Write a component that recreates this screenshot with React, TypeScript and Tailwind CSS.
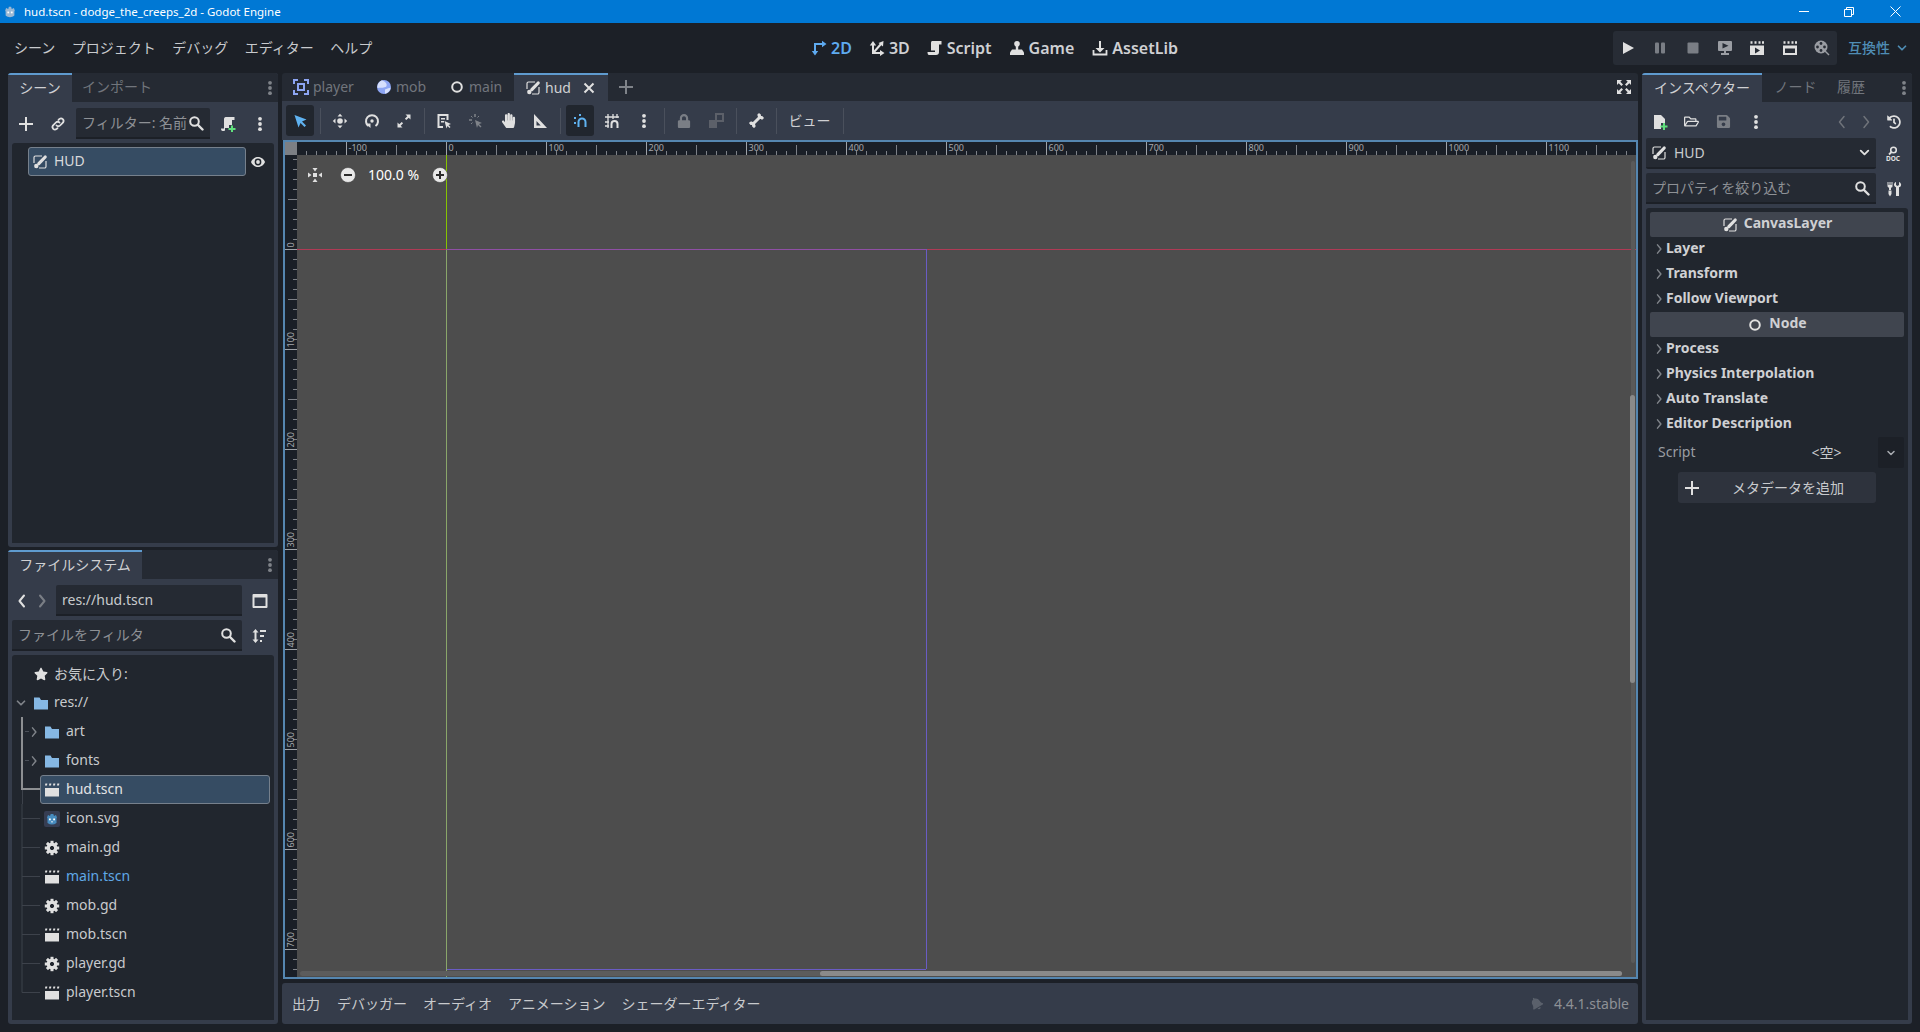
import React from "react";
import { FaBone, FaHandPaper, FaLock, FaStar, FaSave, FaRegFolderOpen, FaHistory, FaBell } from "react-icons/fa";

const C = "#e0e0e0";
type P = { children?: React.ReactNode; s?: number; c?: string };
const I = ({ children, s = 16 }: P) => (
  <svg width={s} height={s} viewBox="0 0 16 16" className="block shrink-0">{children}</svg>
);
const Plus = ({ c = C, s = 16 }: P) => <I s={s}><path d="M7 1h2v6h6v2H9v6H7V9H1V7h6z" fill={c} /></I>;
const Dots = ({ c = C }: P) => <I><circle cx="8" cy="2.8" r="1.9" fill={c} /><circle cx="8" cy="8" r="1.9" fill={c} /><circle cx="8" cy="13.2" r="1.9" fill={c} /></I>;
const Search = ({ c = C }: P) => <I><circle cx="6.5" cy="6.5" r="4.3" fill="none" stroke={c} strokeWidth="2" /><path d="M10 10l4.5 4.5" stroke={c} strokeWidth="2.4" strokeLinecap="round" /></I>;
const Chev = ({ d, c = C, s = 16, w = 2 }: { d: "l" | "r" | "d"; c?: string; s?: number; w?: number }) => (
  <I s={s}><path d={d === "l" ? "M10 2.5L5.5 8l4.5 5.5" : d === "r" ? "M6 2.5L10.5 8 6 13.5" : "M4 6l4 4 4-4"} fill="none" stroke={c} strokeWidth={w} strokeLinecap="round" strokeLinejoin="round" /></I>
);
const Paint = ({ c = C }: P) => <I><path d="M10 2H3.5A1.5 1.5 0 0 0 2 3.5V9M7 14h5.5a1.5 1.5 0 0 0 1.5-1.5V7" fill="none" stroke={c} strokeWidth="1.2" /><path d="M13.2 3L6.8 9.6" stroke={c} strokeWidth="3.2" strokeLinecap="round" /><circle cx="4.3" cy="12" r="2.2" fill={c} /></I>;
const NodeI = ({ c = C }: P) => <I><circle cx="8" cy="8" r="4.8" fill="none" stroke={c} strokeWidth="2" /></I>;
const Player = () => <I><path d="M1 5V1h4M11 1h4v4M15 11v4h-4M5 15H1v-4" fill="none" stroke="#8da5f3" strokeWidth="2" /><rect x="5" y="5" width="6" height="6" fill="none" stroke="#8da5f3" strokeWidth="2" /></I>;
const Mob = () => <I><circle cx="8" cy="8" r="7" fill="#8da5f3" /><path d="M6 1.200C8.500 2.500 11.500 4 10.500 7c-.8 2-4.500 1.500-7 1.800C2.500 9 2 9 1.200 8.500 1.500 4.500 3.500 2 6 1.200z" fill="#d6dffc" /><path d="M9 10.500c1.500-.5 3.500-1.500 5.700-1.800-.5 3-3 5.500-5.700 6.100z" fill="#d6dffc" /></I>;
const Scene = ({ c = C }: P) => <I><path d="M1 6h14v8.500H1z" fill={c} /><path d="M1 2.500h2M5 2.500h2M9 2.500h2M13 2.500h2" stroke={c} strokeWidth="2" transform="skewX(-10) translate(.6 0)" /></I>;
const Folder = () => <I><path d="M1 2.500h5.500L8 5h7v9.500H1z" fill="#86b8e4" /></I>;
const Gear = () => (
  <I>
    <circle cx="8" cy="8" r="3.800" fill="none" stroke={C} strokeWidth="3.200" />
    {[0, 45, 90, 135].map((a) => <rect key={a} x="6.500" y="0.800" width="3" height="14.400" fill={C} transform={`rotate(${a} 8 8)`} mask="url(#gh)" />)}
    <mask id="gh"><rect width="16" height="16" fill="white" /><circle cx="8" cy="8" r="2.300" fill="black" /></mask>
  </I>
);
const Godot = ({ bg }: { bg?: boolean }) => (
  <I>
    {bg && <rect width="16" height="16" rx="2" fill="#363d52" />}
    <path d="M3 6.500l1-2.500 2 1 .7-2h2.600l.7 2 2-1 1 2.500-.5 1V12c-3 2-6 2-9 0V7.500z" fill={bg ? "#478cbf" : "#9ab8d4"} />
    <rect x="5" y="7.500" width="1.800" height="1.800" fill="#fff" /><rect x="9.200" y="7.500" width="1.800" height="1.800" fill="#fff" />
    <rect x="7.300" y="10" width="1.400" height="1.500" fill="#fff" opacity=".8" />
  </I>
);
const Cursor = ({ c = C }: P) => <I><path d="M2.500 2l12 4.500-4.500 2 4 4-1.500 1.500-4-4-2 4.500z" fill={c} /></I>;
const Move = () => <I><path d="M8 .8L10.500 3.500h-5zM8 15.200L5.500 12.500h5zM.8 8L3.500 5.500v5zM15.200 8L12.500 10.500v-5z" fill={C} /><circle cx="8" cy="8" r="2.800" fill={C} /></I>;
const Rotate = () => <I><path d="M4.500 13A6 6 0 1 1 11.500 13" fill="none" stroke={C} strokeWidth="2" /><path d="M1.500 10.500h5v4.500z" fill={C} /><circle cx="8" cy="8" r="1.700" fill={C} /></I>;
const Scale = () => <I><path d="M9.500 1.500h5v5l-1.800-1.800-2.400 2.400-1.400-1.400 2.400-2.400zM6.500 14.500h-5v-5l1.800 1.800 2.400-2.400 1.400 1.400-2.400 2.400z" fill={C} /></I>;
const ListSel = () => <I><path d="M1.500 1h11v6h-2V3H3.500v10H7v2H1.500zM5 5h4v1.500H5zM5 8h3v1.500H5z" fill={C} /><path d="M8.500 8l6.500 3-2.500 1 2 2-1 1-2-2-1 2.500z" fill={C} /></I>;
const SelGhost = () => <I><path d="M7 1v3M1 7h3" stroke="#7f8389" strokeWidth="1.500" /><path d="M7 7l7 3-3 1 2.500 2.500-1 1L10 12l-1 3z" fill="#7f8389" /><path d="M3 3l1.500 1.500M3 11l1.500-1.500M11 3L9.500 4.500" stroke="#7f8389" strokeWidth="1" /></I>;
const RulerI = () => <I><path fillRule="evenodd" d="M2 1l13 14H2zM4.500 8v4.500h4.200z" fill={C} /></I>;
const Snap = () => <I><path d="M6.500 14V9a3.500 3.500 0 0 1 7 0v5" fill="none" stroke="#5fb2f0" strokeWidth="2" /><rect x="2" y="4" width="2" height="2" fill="#5fb2f0" /><rect x="2" y="9" width="2" height="2" fill="#5fb2f0" /><rect x="7" y="1" width="2" height="2" fill="#5fb2f0" /></I>;
const GridI = () => <I><path d="M4 1v14M9 1v5M13 1v4M1 4h14M1 9h4M1 13h4" stroke={C} strokeWidth="1.300" /><path d="M7.500 15v-4a3 3 0 0 1 6 0v4" fill="none" stroke={C} strokeWidth="2" /></I>;
const Group = () => <I><path d="M8 1h7v7H8z" fill="none" stroke="#5c6069" strokeWidth="2" /><path d="M1 7h8v8H1z" fill="#5c6069" /></I>;
const Expand = () => <I><path d="M1 1h5L4.300 2.700 7 5.400 5.400 7 2.700 4.300 1 6zM15 1v5l-1.700-1.700L10.600 7 9 5.400l2.700-2.700L10 1zM1 15v-5l1.700 1.700L5.400 9 7 10.600l-2.700 2.700L6 15zM15 15h-5l1.700-1.700L9 10.600 10.600 9l2.700 2.700L15 10z" fill={C} /></I>;
const Eye = () => <I><path d="M8 3C4.500 3 2 5.500 1 8c1 2.500 3.500 5 7 5s6-2.500 7-5c-1-2.500-3.500-5-7-5z" fill={C} /><circle cx="8" cy="8" r="3.400" fill="#21262e" /><circle cx="8" cy="8" r="1.900" fill={C} /></I>;
const ScriptAdd = () => <I><path d="M5.500 1h9v3H12v5H9v3H5v1.500c0 1-.5 1.500-1 1.500H2.500C1.500 15 1 14 1 12.500h3V3a2 2 0 0 1 1.500-2z" fill={C} /><path d="M11 9.500h2V12h2.500v2H13v2h-2v-2H8.500v-2H11z" fill="#5fe07c" /></I>;
const FileAdd = () => <I><path d="M2 1h7l4 4v4H9v6H2z" fill={C} /><path d="M11 9h2v2.500h2.500v2H13V16h-2v-2.500H8.500v-2H11z" fill="#5fe07c" /></I>;
const D2 = () => <I><path d="M4 13V4h8" fill="none" stroke="#5eaaf0" strokeWidth="2" /><path d="M.8 11h6.400L4 15.500zM11 .8L15.500 4 11 7.200z" fill="#5eaaf0" /></I>;
const D3 = () => <I><path d="M4 4v9h9M5 12l7-8" fill="none" stroke={C} strokeWidth="2" /><path d="M.8 5.500L4 1l3.200 4.500zM11 10l4.500 3-4.500 3zM9.500 3l5-2-.5 5.500z" fill={C} /></I>;
const ScriptI = () => <I><path d="M5 1h9.500v3.500H12V12c0 2-1 3-3 3H2c-1-.3-1.500-1-1.500-3H8v-1.500H4V3a2 2 0 0 1 1-2z" fill={C} /></I>;
const Game = () => <I><circle cx="8" cy="3.800" r="2.800" fill={C} /><rect x="6.800" y="5" width="2.400" height="6" fill={C} /><path d="M3 9.500h10l2 3v2.500H1v-2.500z" fill={C} /></I>;
const Asset = () => <I><path d="M7 1h2v7h3.500L8 12.500 3.500 8H7z" fill={C} /><path d="M1.500 10v4.500h13V10" fill="none" stroke={C} strokeWidth="1.800" /></I>;
const Play = () => <I><path d="M3 2l11 6-11 6z" fill={C} /></I>;
const Pause = () => <I><rect x="3" y="2.500" width="4" height="11" rx="1" fill="#7a7e85" /><rect x="9" y="2.500" width="4" height="11" rx="1" fill="#7a7e85" /></I>;
const Stop = () => <I><rect x="2.500" y="2.500" width="11" height="11" rx="1" fill="#7a7e85" /></I>;
const Remote = () => <I><path d="M2 1h12a1 1 0 0 1 1 1v8a1 1 0 0 1-1 1H9v2h3v2H4v-2h3v-2H2a1 1 0 0 1-1-1V2a1 1 0 0 1 1-1z" fill="#9a9da3" /><path d="M5.500 3l6 2.800-6 2.800z" fill="#272c35" /></I>;
const Clap = ({ open }: { open?: boolean }) => <I>{open ? <path fillRule="evenodd" d="M1 5.500h14V15H1zM3 8.500v4.500h10V8.500z" fill={C} /> : <path fillRule="evenodd" d="M1 5.500h14V15H1zM6 7.500v6l5-3z" fill={C} />}<path d="M1.500 2.500h2M5.500 2.500h2M9.500 2.500h2M13 2.500h2" stroke={C} strokeWidth="2.400" /></I>;
const Film = () => <I><circle cx="7" cy="7" r="6.500" fill="#9a9da3" /><circle cx="7" cy="3.500" r="1.400" fill="#272c35" /><circle cx="7" cy="10.500" r="1.400" fill="#272c35" /><circle cx="3.500" cy="7" r="1.400" fill="#272c35" /><circle cx="10.500" cy="7" r="1.400" fill="#272c35" /><path d="M11 11l4 4" stroke="#9a9da3" strokeWidth="1.500" /></I>;
const Doc = () => <I><circle cx="8.500" cy="4" r="2.800" fill="none" stroke={C} strokeWidth="1.600" /><path d="M6.500 6L4 8.500" stroke={C} strokeWidth="1.800" /><text x="8" y="14.800" textAnchor="middle" fontSize="6.500" fontWeight="700" fill={C} fontFamily="Noto Sans">DOC</text></I>;
const Tools = () => <I><path d="M1.500 1v4c0 1 1 1.500 1.500 1.800V9h2V6.800C6 6.500 6.500 6 6.500 5V1h-1v3h-1V1h-1v3h-1V1z" fill={C} /><path d="M2.500 9.500h3V13L4 15.500 2.500 13zM10 1v3l1.500 1L13 4V1c1.500.5 2.500 2 2 3.500-.3 1-1 1.500-2 1.800V15h-3V6.300C8.500 5.800 8 4.500 8 3.500 8 2.300 9 1.300 10 1z" fill={C} /></I>;
const Sort = () => <I><path d="M4.500 1L7.500 4.500H5.500v7h2L4.500 15l-3-3.500h2v-7h-2z" fill={C} /><path d="M9 2h6v2H9zM9 7h4v2H9zM9 12h2v2H9z" fill={C} /></I>;
const Layout = () => <I><path fillRule="evenodd" d="M1.500 1h13a1 1 0 0 1 1 1v12a1 1 0 0 1-1 1h-13a1 1 0 0 1-1-1V2a1 1 0 0 1 1-1zM2.500 4.500v8.500h11V4.500z" fill={C} /></I>;
const LinkI = () => <I><path d="M6.500 9.500a2.500 2.500 0 0 0 3.600 0l3-3a2.600 2.600 0 0 0-3.600-3.600l-1 1M9.500 6.500a2.500 2.500 0 0 0-3.600 0l-3 3a2.600 2.600 0 0 0 3.600 3.600l1-1" fill="none" stroke={C} strokeWidth="1.800" strokeLinecap="round" /></I>;
const CenterView = () => <I><path d="M5.500 1h5L8 4.500zM5.500 15h5L8 11.500zM1 5.500v5L4.500 8zM15 5.500v5L11.500 8z" fill={C} /><rect x="6" y="6" width="4" height="4" fill={C} /></I>;
const Zoom = ({ plus }: { plus?: boolean }) => (
  <svg width="16" height="16" viewBox="0 0 16 16" className="block shrink-0"><circle cx="8" cy="8" r="7.500" fill="#e8e8e8" stroke="#333" strokeOpacity=".5" /><path d={plus ? "M7 4h2v3h3v2H9v3H7V9H4V7h3z" : "M4 7h8v2H4z"} fill="#2b2b2b" /></svg>
);

const Sep = ({ w = 8 }: { w?: number }) => (
  <div className="h-[26px] flex justify-center shrink-0" style={{ width: w }}><div className="w-px h-full bg-[#4a505c]" /></div>
);
const Tool = ({ children, on }: { children: React.ReactNode; on?: boolean }) => (
  <div className="w-8 h-[31px] flex items-center justify-center shrink-0">
    <div className={`w-7 h-[31px] flex items-center justify-center rounded-[3px] ${on ? "bg-[#21262e]" : ""}`}>{children}</div>
  </div>
);

const HRuler = () => {
  const ticks: React.ReactNode[] = [];
  for (let u = -140; u <= 1180; u += 10) {
    const x = 149.5 + u;
    const major = u % 100 === 0;
    const mid = u % 50 === 0;
    ticks.push(<line key={u} x1={x} x2={x} y1={major ? 0 : mid ? 3 : 9} y2={13} stroke={major ? "#9ea2a8" : "#7d8188"} />);
    if (major) ticks.push(<text key={"t" + u} x={x + 2} y={9} fontSize="9" fill="#a4a7ac" fontFamily="Noto Sans">{u}</text>);
  }
  return <svg width="1339" height="13" className="block bg-[#1a1f27]">{ticks}</svg>;
};
const VRuler = () => {
  const ticks: React.ReactNode[] = [];
  for (let u = -90; u <= 730; u += 10) {
    const y = 94.5 + u;
    const major = u % 100 === 0;
    const mid = u % 50 === 0;
    ticks.push(<line key={u} y1={y} y2={y} x1={major ? 0 : mid ? 3 : 8} x2={12} stroke={major ? "#9ea2a8" : "#7d8188"} />);
    if (major) ticks.push(<text key={"t" + u} transform={`translate(9 ${y - 2}) rotate(-90)`} fontSize="9" fill="#a4a7ac" fontFamily="Noto Sans">{u}</text>);
  }
  return <svg width="12" height="822" className="block bg-[#1a1f27] shrink-0">{ticks}</svg>;
};

const Guide = ({ bright, last, tick, topBright }: { bright?: boolean; last?: boolean; tick?: boolean; topBright?: boolean }) => (
  <svg width="40" height="29" className="block shrink-0">
    <line x1="10" x2="10" y1="0" y2={last ? 14.5 : bright ? 15 : 29} stroke={topBright ? "#8d8f92" : "#3d424b"} strokeWidth={topBright ? 2 : 1} />
    {bright && <line x1="10.500" x2="10.500" y1="15" y2="29" stroke="#3d424b" />}
    {tick ? <line x1="13" x2="17" y1="14.5" y2="14.5" stroke="#4a4f58" /> : <line x1="10" x2="28" y1={bright ? 14 : 14.5} y2={bright ? 14 : 14.5} stroke={bright ? "#8d8f92" : "#3d424b"} strokeWidth={bright ? 2 : 1} />}
  </svg>
);

const FileRow = ({ icon, name, last, blue }: { icon: React.ReactNode; name: string; last?: boolean; blue?: boolean }) => (
  <div className="h-[29px] flex items-center">
    <Guide last={last} />
    <div className="ml-[-8px] mr-[6px]">{icon}</div>
    <span className={`pb-[1px] ${blue ? "text-[#5fa8e6]" : ""}`}>{name}</span>
  </div>
);
const FolderRow = ({ name }: { name: string }) => (
  <div className="h-[29px] flex items-center">
    <Guide tick topBright />
    <div className="ml-[-24px] mr-[6px] flex items-center"><Chev d="r" c="#7f8389" s={12} /><div className="ml-[4px]"><Folder /></div></div>
    <span className="pb-[1px]">{name}</span>
  </div>
);

const Cat = ({ label }: { label: string }) => (
  <div className="h-[25px] flex items-center pl-[3px] font-bold text-[#cfd0d3]">
    <div className="mb-[2px] mr-[1px]"><Chev d="r" c="#7f8389" s={12} w={2} /></div>
    <span className="pb-[3px]">{label}</span>
  </div>
);
const Head = ({ icon, label }: { icon: React.ReactNode; label: string }) => (
  <div className="h-[25px] flex items-center justify-center gap-[6px] bg-[#40454f] rounded-[2px] font-bold text-[#cfd0d3]">
    {icon}<span className="pb-[3px]">{label}</span>
  </div>
);
const Input = ({ className, children }: { className: string; children: React.ReactNode }) => (
  <div className={`h-[31px] bg-[#252a33] border-b-2 border-[#1c2027] rounded-t-[2px] flex items-center shrink-0 ${className}`}>{children}</div>
);

const font = "font-['Noto_Sans','Noto_Sans_CJK_JP',sans-serif]";

export default function App() {
  return (
    <div className={`w-[1920px] h-[1032px] flex flex-col bg-[#1c2027] overflow-hidden text-[14px] leading-none text-[#c8cacd] ${font}`}>
      {/* title */}
      <div className="h-[23px] bg-[#0078d4] flex items-center pl-[3px] text-white text-[11.5px] shrink-0">
        <div className="w-[14px] h-[14px] overflow-hidden mr-[7px]"><svg width="14" height="14" viewBox="0 0 16 16"><path d="M2.500 6.500l1-3 2.500 1 .7-2.500h2.600l.7 2.500 2.500-1 1 3-.5 1V12c-3 2.500-7 2.500-10 0V7.500z" fill="#9ab8d4" /><rect x="5" y="7.500" width="2" height="2" fill="#fff" /><rect x="9" y="7.500" width="2" height="2" fill="#fff" /></svg></div>
        <span>hud.tscn - dodge_the_creeps_2d - Godot Engine</span>
        <div className="ml-auto flex items-center h-full">
          <div className="w-[45px] flex justify-center"><div className="w-[10px] h-px bg-white" /></div>
          <div className="w-[46px] flex justify-center"><svg width="10" height="10"><path d="M.5 2.500h7v7h-7zM2.500 2.500v-2h7v7h-2" fill="none" stroke="#fff" /></svg></div>
          <div className="w-[46px] flex justify-center mr-[2px]"><svg width="11" height="11"><path d="M.5.500l10 10M10.500.500l-10 10" stroke="#fff" /></svg></div>
        </div>
      </div>
      {/* menu */}
      <div className="h-[50px] shrink-0 relative flex items-center pl-[14px] text-[#c8cacd]">
        <div className="flex gap-[16.5px] w-[661px] items-center">
          <span>シーン</span><span>プロジェクト</span><span>デバッグ</span><span>エディター</span><span>ヘルプ</span>
        </div>
        <div className="flex items-center text-[16px] font-semibold ml-[136px] gap-[17px] text-[#cfd0d3]">
          <div className="flex items-center gap-[4px] text-[#5eaaf0]"><D2 /><span>2D</span></div>
          <div className="flex items-center gap-[4px]"><D3 /><span>3D</span></div>
          <div className="flex items-center gap-[4px]"><ScriptI /><span>Script</span></div>
          <div className="flex items-center gap-[4px]"><Game /><span>Game</span></div>
          <div className="flex items-center gap-[4px] ml-px"><Asset /><span>AssetLib</span></div>
        </div>
        <div className="ml-auto flex items-center">
          <div className="w-[224px] h-[34px] bg-[#272c35] rounded-[3px] flex items-center justify-between px-[7px]">
            <Play /><Pause /><Stop /><Remote /><Clap /><Clap open /><Film />
          </div>
          <div className="w-[83px] flex items-center pl-[11px] gap-[5px] text-[#4f8db5] font-medium">
            <span>互換性</span><Chev d="d" c="#4f8db5" s={14} />
          </div>
        </div>
      </div>
      {/* main */}
      <div className="flex-1 min-h-0 flex px-2 pb-2 gap-1">
        {/* left */}
        <div className="w-[270px] shrink-0 flex flex-col gap-[3px]">
          <div className="flex-1 bg-[#353c4a] rounded-[3px] flex flex-col min-h-0 overflow-hidden">
            <div className="h-[29px] bg-[#252a33] flex items-stretch shrink-0">
              <div className="w-[64px] bg-[#353c4a] border-t-2 border-[#5f9bcf] pb-[2px] flex items-center justify-center text-[#cfd0d3]">シーン</div>
              <div className="w-[90px] pb-[2px] flex items-center justify-center text-[#71757c]">インポート</div>
              <div className="ml-auto flex items-center pr-0"><Dots c="#7f8389" /></div>
            </div>
            <div className="h-[41px] flex items-center shrink-0 pl-[10px] pt-[2px]">
              <div className="w-[32px]"><Plus /></div>
              <div className="w-[26px]"><LinkI /></div>
              <Input className="w-[134px] pl-[6px]">
                <span className="text-[#8e9196] w-[106px] whitespace-nowrap">フィルター: 名前</span>
                <Search />
              </Input>
              <div className="ml-[10px]"><ScriptAdd /></div>
              <div className="ml-[16px]"><Dots /></div>
            </div>
            <div className="flex-1 mx-1 mb-1 bg-[#21262e] rounded-t-[3px] relative pt-[4px]">
              <div className="flex items-center">
                <div className="ml-4 w-[218px] h-[29px] bg-[#364c63] border border-[#76808c] rounded-[3px] flex items-center pl-[3px] gap-[6px] text-[#d8d9db]">
                  <Paint /><span className="pb-[2px]">HUD</span>
                </div>
                <div className="ml-[4px]"><Eye /></div>
              </div>
            </div>
          </div>
          <div className="flex-1 bg-[#353c4a] rounded-[3px] flex flex-col min-h-0 overflow-hidden">
            <div className="h-[29px] bg-[#252a33] flex items-stretch shrink-0">
              <div className="w-[134px] bg-[#353c4a] border-t-2 border-[#5f9bcf] pb-[2px] flex items-center justify-center text-[#cfd0d3]">ファイルシステム</div>
              <div className="ml-auto flex items-center"><Dots c="#7f8389" /></div>
            </div>
            <div className="h-[37px] flex items-end shrink-0 pl-[6px]">
              <div className="h-[31px] flex items-center gap-[4px]">
                <Chev d="l" s={16} />
                <Chev d="r" c="#7a7e85" s={16} />
              </div>
              <Input className="w-[186px] pl-[6px] ml-[6px]"><span>res://hud.tscn</span></Input>
              <div className="h-[31px] flex items-center ml-[10px]"><Layout /></div>
            </div>
            <div className="h-[31px] mt-[4px] flex items-center shrink-0 pl-1">
              <Input className="w-[230px] pl-[6px] pr-[6px] justify-between">
                <span className="text-[#8e9196] pt-[1px]">ファイルをフィルタ</span><Search />
              </Input>
              <div className="ml-[9px]"><Sort /></div>
            </div>
            <div className="flex-1 mx-1 mb-1 mt-[4px] bg-[#21262e] rounded-t-[3px] pt-[4px]">
              <div className="h-[29px] flex items-center pl-[21px] gap-[5px]"><FaStar size={14} color={C} className="mx-[1px]" /><span>お気に入り:</span></div>
              <div className="h-[29px] flex items-center ml-[2px]">
                <Chev d="d" c="#7f8389" s={14} />
                <div className="ml-[5px] mr-[5px]"><Folder /></div><span className="pb-[1px]">res://</span>
              </div>
              <FolderRow name="art" />
              <FolderRow name="fonts" />
              <div className="h-[29px] flex items-center">
                <Guide bright topBright />
                <div className="ml-[-12px] w-[230px] h-[29px] bg-[#364c63] border border-[#76808c] rounded-[3px] flex items-center pl-[3px] gap-[6px] text-[#e2e3e5] shrink-0 z-10">
                  <Scene /><span className="pb-[1px]">hud.tscn</span>
                </div>
              </div>
              <FileRow icon={<Godot bg />} name="icon.svg" />
              <FileRow icon={<Gear />} name="main.gd" />
              <FileRow icon={<Scene />} name="main.tscn" blue />
              <FileRow icon={<Gear />} name="mob.gd" />
              <FileRow icon={<Scene />} name="mob.tscn" />
              <FileRow icon={<Gear />} name="player.gd" />
              <FileRow icon={<Scene />} name="player.tscn" last />
            </div>
          </div>
        </div>
        {/* center */}
        <div className="w-[1356px] shrink-0 flex flex-col">
          <div className="h-[28px] bg-[#252a33] rounded-t-[3px] flex items-stretch shrink-0 text-[#71757c]">
            <div className="flex items-center pl-[11px] gap-[4px] w-[83px]"><Player /><span>player</span></div>
            <div className="flex items-center pl-[11px] gap-[4px] w-[73px]"><Mob /><span>mob</span></div>
            <div className="flex items-center pl-[11px] gap-[4px] w-[76px]"><NodeI /><span>main</span></div>
            <div className="w-[94px] bg-[#353c4a] border-t-2 border-[#5f9bcf] flex items-center pl-[11px] gap-[4px] text-[#cfd0d3]">
              <Paint /><span>hud</span>
              <svg width="12" height="12" className="ml-[8px]"><path d="M1.500 1.500l9 9M10.500 1.500l-9 9" stroke={C} strokeWidth="2" /></svg>
            </div>
            <div className="flex items-center ml-[10px]"><Plus c="#7f8389" /></div>
            <div className="ml-auto flex items-center pr-[6px]"><Expand /></div>
          </div>
          <div className="h-[39px] bg-[#353c4a] flex items-center pl-[2px] shrink-0">
            <Tool on><Cursor c="#5fb2f0" /></Tool>
            <Sep />
            <Tool><Move /></Tool><Tool><Rotate /></Tool><Tool><Scale /></Tool>
            <Sep />
            <Tool><ListSel /></Tool><Tool><SelGhost /></Tool><Tool><FaHandPaper size={15} color={C} /></Tool><Tool><RulerI /></Tool>
            <Sep />
            <Tool on><Snap /></Tool><Tool><GridI /></Tool><Tool><Dots /></Tool>
            <Sep />
            <Tool><FaLock size={14} color="#7a7e85" /></Tool><Tool><Group /></Tool>
            <Sep />
            <Tool><FaBone size={15} color={C} className="-rotate-45" /></Tool>
            <Sep />
            <div className="w-[59px] flex justify-center shrink-0 text-[#cfd0d3]">ビュー</div>
            <Sep />
          </div>
          <div className="h-[839px] ml-px border-2 border-[#5586b0] flex flex-col shrink-0">
            <div className="flex shrink-0">
              <div className="w-[12px] h-[13px] bg-[#7c7f84] shrink-0" />
              <HRuler />
            </div>
            <div className="flex flex-1 min-h-0">
              <VRuler />
              <div className="flex-1 bg-[#4d4d4d] relative overflow-hidden">
                <div className="absolute left-[149px] top-0 w-px h-[94px] bg-[#86c400]" />
                <div className="absolute left-[149px] top-[94px] w-px bottom-0 bg-[#8aa66a]" />
                <div className="absolute left-0 top-[94px] w-[149px] h-px bg-[#b03a55]" />
                <div className="absolute left-[149px] top-[94px] w-[480px] h-px bg-[#8f4fa5]" />
                <div className="absolute left-[629px] top-[94px] right-0 h-px bg-[#b03a55]" />
                <div className="absolute left-[629px] top-[94px] w-px h-[720px] bg-[#6a5cc4]" />
                <div className="absolute left-[150px] top-[814px] w-[479px] h-px bg-[#6a5cc4]" />
                <div className="absolute left-[10px] top-[12px] flex items-center text-white text-[14px]">
                  <div className="w-[22px]"><CenterView /></div>
                  <div className="ml-[11px]"><Zoom /></div>
                  <span className="ml-[12px] w-[63px] pb-[1px]">100.0 %</span>
                  <div className="ml-[1px]"><Zoom plus /></div>
                </div>
                <div className="absolute right-[1px] top-[6px] w-[4px] h-[802px] rounded-full bg-[#5a5a5a]" />
                <div className="absolute right-[1px] top-[240px] w-[5px] h-[288px] rounded-full bg-[#8a8a8a]" />
                <div className="absolute left-[3px] right-[14px] bottom-[1px] h-[5px] rounded-full bg-[#5c5c5c]" />
                <div className="absolute left-[523px] right-[14px] bottom-[1px] h-[5px] rounded-full bg-[#8a8a8a]" />
              </div>
            </div>
          </div>
          <div className="h-[41px] mt-[4px] bg-[#353c4a] rounded-[3px] flex items-center pl-[10px] pr-[9px] shrink-0">
            <span className="mr-[17px]">出力</span>
            <span className="mr-[16px]">デバッガー</span>
            <span className="mr-[16px]">オーディオ</span>
            <span className="mr-[16px]">アニメーション</span>
            <span>シェーダーエディター</span>
            <div className="ml-auto flex items-center gap-[11px] text-[#8e9196]">
              <FaBell size={13} color="#5a606b" className="-rotate-[30deg]" /><span>4.4.1.stable</span>
            </div>
          </div>
        </div>
        {/* right */}
        <div className="w-[270px] shrink-0 bg-[#353c4a] rounded-[3px] flex flex-col min-h-0 overflow-hidden">
          <div className="h-[29px] bg-[#252a33] flex items-stretch shrink-0 text-[#71757c]">
            <div className="w-[120px] bg-[#353c4a] border-t-2 border-[#5f9bcf] pb-[2px] flex items-center justify-center text-[#cfd0d3]">インスペクター</div>
            <div className="w-[67px] pb-[2px] flex items-center justify-center">ノード</div>
            <div className="w-[44px] pb-[2px] flex items-center justify-center">履歴</div>
            <div className="ml-auto flex items-center"><Dots c="#7f8389" /></div>
          </div>
          <div className="h-[36px] flex items-center shrink-0 pl-[10px] pt-[3px]">
            <div className="w-8"><FileAdd /></div>
            <div className="w-8"><FaRegFolderOpen size={15} color={C} /></div>
            <div className="w-8"><FaSave size={15} color="#7a7e85" /></div>
            <div className="w-8"><Dots /></div>
            <div className="ml-[54px] w-6"><Chev d="l" c="#6f737a" s={16} w={1.500} /></div>
            <div className="w-[29px]"><Chev d="r" c="#6f737a" s={16} w={1.500} /></div>
            <FaHistory size={14} color={C} />
          </div>
          <div className="flex items-center h-[31px] shrink-0 pl-1">
            <Input className="w-[230px] border-b-0 rounded-b-[2px] pl-[5px] pr-[4px] gap-[7px]">
              <Paint /><span>HUD</span><div className="ml-auto"><Chev d="d" s={15} /></div>
            </Input>
            <div className="ml-[9px]"><Doc /></div>
          </div>
          <div className="flex items-center h-[31px] mt-[4px] shrink-0 pl-1">
            <Input className="w-[230px] pl-[6px] pr-[6px] justify-between">
              <span className="text-[#8e9196] pt-[1px]">プロパティを絞り込む</span><Search />
            </Input>
            <div className="ml-[10px]"><Tools /></div>
          </div>
          <div className="flex-1 mx-1 mb-1 mt-[4px] bg-[#21262e] rounded-t-[3px] p-1 text-[#cfd0d3]">
            <Head icon={<Paint />} label="CanvasLayer" />
            <Cat label="Layer" /><Cat label="Transform" /><Cat label="Follow Viewport" />
            <Head icon={<NodeI />} label="Node" />
            <Cat label="Process" /><Cat label="Physics Interpolation" /><Cat label="Auto Translate" /><Cat label="Editor Description" />
            <div className="h-[31px] flex items-stretch font-normal">
              <div className="flex items-center pl-[8px] w-[125px] pb-[2px] text-[#9a9da2]">Script</div>
              <div className="flex items-center justify-center w-[103px] text-[#c8cacd]">&lt;空&gt;</div>
              <div className="w-[26px] bg-[#1c2027] flex items-center justify-center rounded-[2px]"><Chev d="d" c="#a8abb0" s={12} /></div>
            </div>
            <div className="mt-[4px] ml-[28px] w-[198px] h-[31px] bg-[#2e333d] rounded-[3px] flex items-center pl-[6px] text-[#c8cacd]">
              <Plus />
              <span className="ml-[32px]">メタデータを追加</span>
            </div>
          </div>
        </div>
      </div>
    </div>
  );
}
